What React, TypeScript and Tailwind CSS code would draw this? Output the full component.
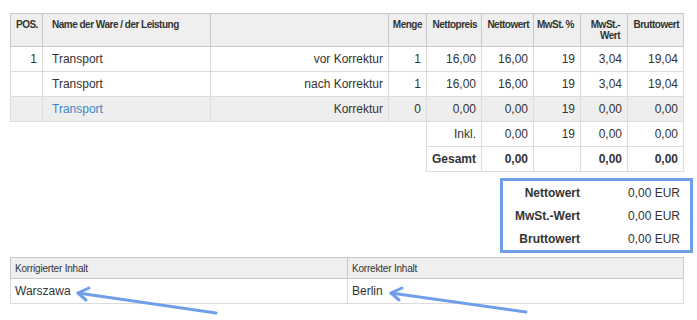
import React from "react"

type Line = {
  pos?: string
  name: string
  kind: string
  qty: string
  price: string
  net: string
  vat: string
  vatValue: string
  gross: string
  shaded?: boolean
}

const lines: Line[] = [
  { pos: "1", name: "Transport", kind: "vor Korrektur", qty: "1", price: "16,00", net: "16,00", vat: "19", vatValue: "3,04", gross: "19,04" },
  { name: "Transport", kind: "nach Korrektur", qty: "1", price: "16,00", net: "16,00", vat: "19", vatValue: "3,04", gross: "19,04" },
  { name: "Transport", kind: "Korrektur", qty: "0", price: "0,00", net: "0,00", vat: "19", vatValue: "0,00", gross: "0,00", shaded: true },
]

const totals = [
  { label: "Nettowert", value: "0,00 EUR" },
  { label: "MwSt.-Wert", value: "0,00 EUR" },
  { label: "Bruttowert", value: "0,00 EUR" },
]

const th = "border border-[#c8c8c8] bg-[#efefef] align-top pt-[5px] text-[10px] leading-[11px] tracking-[-0.5px] font-bold text-[#333]"
const cell = "border border-[#dcdcdc] align-middle"
const num = `${cell} text-right pl-1 pr-[5px]`
const empty = "border-none"

function Arrow({ tip, tail, up, down }: { tip: [number, number]; tail: [number, number]; up: [number, number]; down: [number, number] }) {
  return (
    <g>
      <line x1={tail[0]} y1={tail[1]} x2={tip[0]} y2={tip[1]} />
      <polyline points={`${up[0]},${up[1]} ${tip[0]},${tip[1]} ${down[0]},${down[1]}`} />
    </g>
  )
}

export default function App() {
  return (
    <div className="relative w-[697px] h-[320px] overflow-hidden bg-white pt-[13px] font-['Liberation_Sans',Arial,sans-serif] text-[12px] text-[#333]">
      <table className="ml-[10px] w-[673px] table-fixed border-collapse">
        <colgroup>
          <col className="w-[32px]" />
          <col className="w-[168px]" />
          <col className="w-[178px]" />
          <col className="w-[38px]" />
          <col className="w-[55px]" />
          <col className="w-[52px]" />
          <col className="w-[47px]" />
          <col className="w-[47px]" />
          <col className="w-[56px]" />
        </colgroup>
        <thead>
          <tr className="h-[33px]">
            <th className={`${th} text-left pl-[5px]`}>POS.</th>
            <th className={`${th} text-left pl-[9px]`}>Name der Ware / der Leistung</th>
            <th className={th}></th>
            <th className={`${th} text-right pr-1`}>Menge</th>
            <th className={`${th} text-right pr-1`}>Nettopreis</th>
            <th className={`${th} text-right pr-1`}>Nettowert</th>
            <th className={`${th} text-right pr-[6px]`}>MwSt. %</th>
            <th className={`${th} text-right pr-[7px] pl-1`}>MwSt.-Wert</th>
            <th className={`${th} text-right pr-1`}>Bruttowert</th>
          </tr>
        </thead>
        <tbody>
          {lines.map((l, i) => (
            <tr key={i} className={`h-[25px] ${l.shaded ? "bg-[#eeeeee]" : ""}`}>
              <td className={num}>{l.pos}</td>
              <td className={`${cell} text-left pl-[9px] ${l.shaded ? "text-[#3b87c9]" : ""}`}>{l.name}</td>
              <td className={num}>{l.kind}</td>
              <td className={num}>{l.qty}</td>
              <td className={num}>{l.price}</td>
              <td className={num}>{l.net}</td>
              <td className={num}>{l.vat}</td>
              <td className={num}>{l.vatValue}</td>
              <td className={num}>{l.gross}</td>
            </tr>
          ))}
          <tr className="h-[25px]">
            <td className={empty}></td>
            <td className={empty}></td>
            <td className={empty}></td>
            <td className={empty}></td>
            <td className={num}>Inkl.</td>
            <td className={num}>0,00</td>
            <td className={num}>19</td>
            <td className={num}>0,00</td>
            <td className={num}>0,00</td>
          </tr>
          <tr className="h-[25px] font-bold">
            <td className={empty}></td>
            <td className={empty}></td>
            <td className={empty}></td>
            <td className={empty}></td>
            <td className={num}>Gesamt</td>
            <td className={num}>0,00</td>
            <td className={num}></td>
            <td className={num}>0,00</td>
            <td className={num}>0,00</td>
          </tr>
        </tbody>
      </table>

      {/* Summenblock */}
      <div className="ml-[500px] mt-[6px] w-[193px] border-[3px] border-[#6f9fea]">
        {totals.map((t) => (
          <div key={t.label} className="grid grid-cols-[77px_100px] h-[23px] items-center">
            <span className="text-right font-bold">{t.label}</span>
            <span className="text-right">{t.value}</span>
          </div>
        ))}
      </div>

      <table className="ml-[10px] mt-[4px] w-[673px] table-fixed border-collapse">
        <colgroup>
          <col className="w-[337px]" />
          <col className="w-[336px]" />
        </colgroup>
        <thead>
          <tr className="h-[21px]">
            <th className="border border-[#c8c8c8] bg-[#efefef] px-1 text-left text-[10px] tracking-[-0.2px] font-normal text-[#333]">Korrigierter Inhalt</th>
            <th className="border border-[#c8c8c8] bg-[#efefef] px-1 text-left text-[10px] tracking-[-0.2px] font-normal text-[#333]">Korrekter Inhalt</th>
          </tr>
        </thead>
        <tbody>
          <tr className="h-[25px]">
            <td className="border border-[#dcdcdc] px-1">Warszawa</td>
            <td className="border border-[#dcdcdc] px-1">Berlin</td>
          </tr>
        </tbody>
      </table>

      <svg
        className="absolute inset-0 pointer-events-none"
        width="697"
        height="320"
        fill="none"
        stroke="#6f9fea"
        strokeWidth="3"
        strokeLinecap="round"
        strokeLinejoin="round"
      >
        <Arrow tip={[78, 293]} tail={[216, 313]} up={[89, 288]} down={[86, 300]} />
        <Arrow tip={[391, 293]} tail={[526, 312]} up={[402, 288]} down={[399, 300]} />
      </svg>
    </div>
  )
}
